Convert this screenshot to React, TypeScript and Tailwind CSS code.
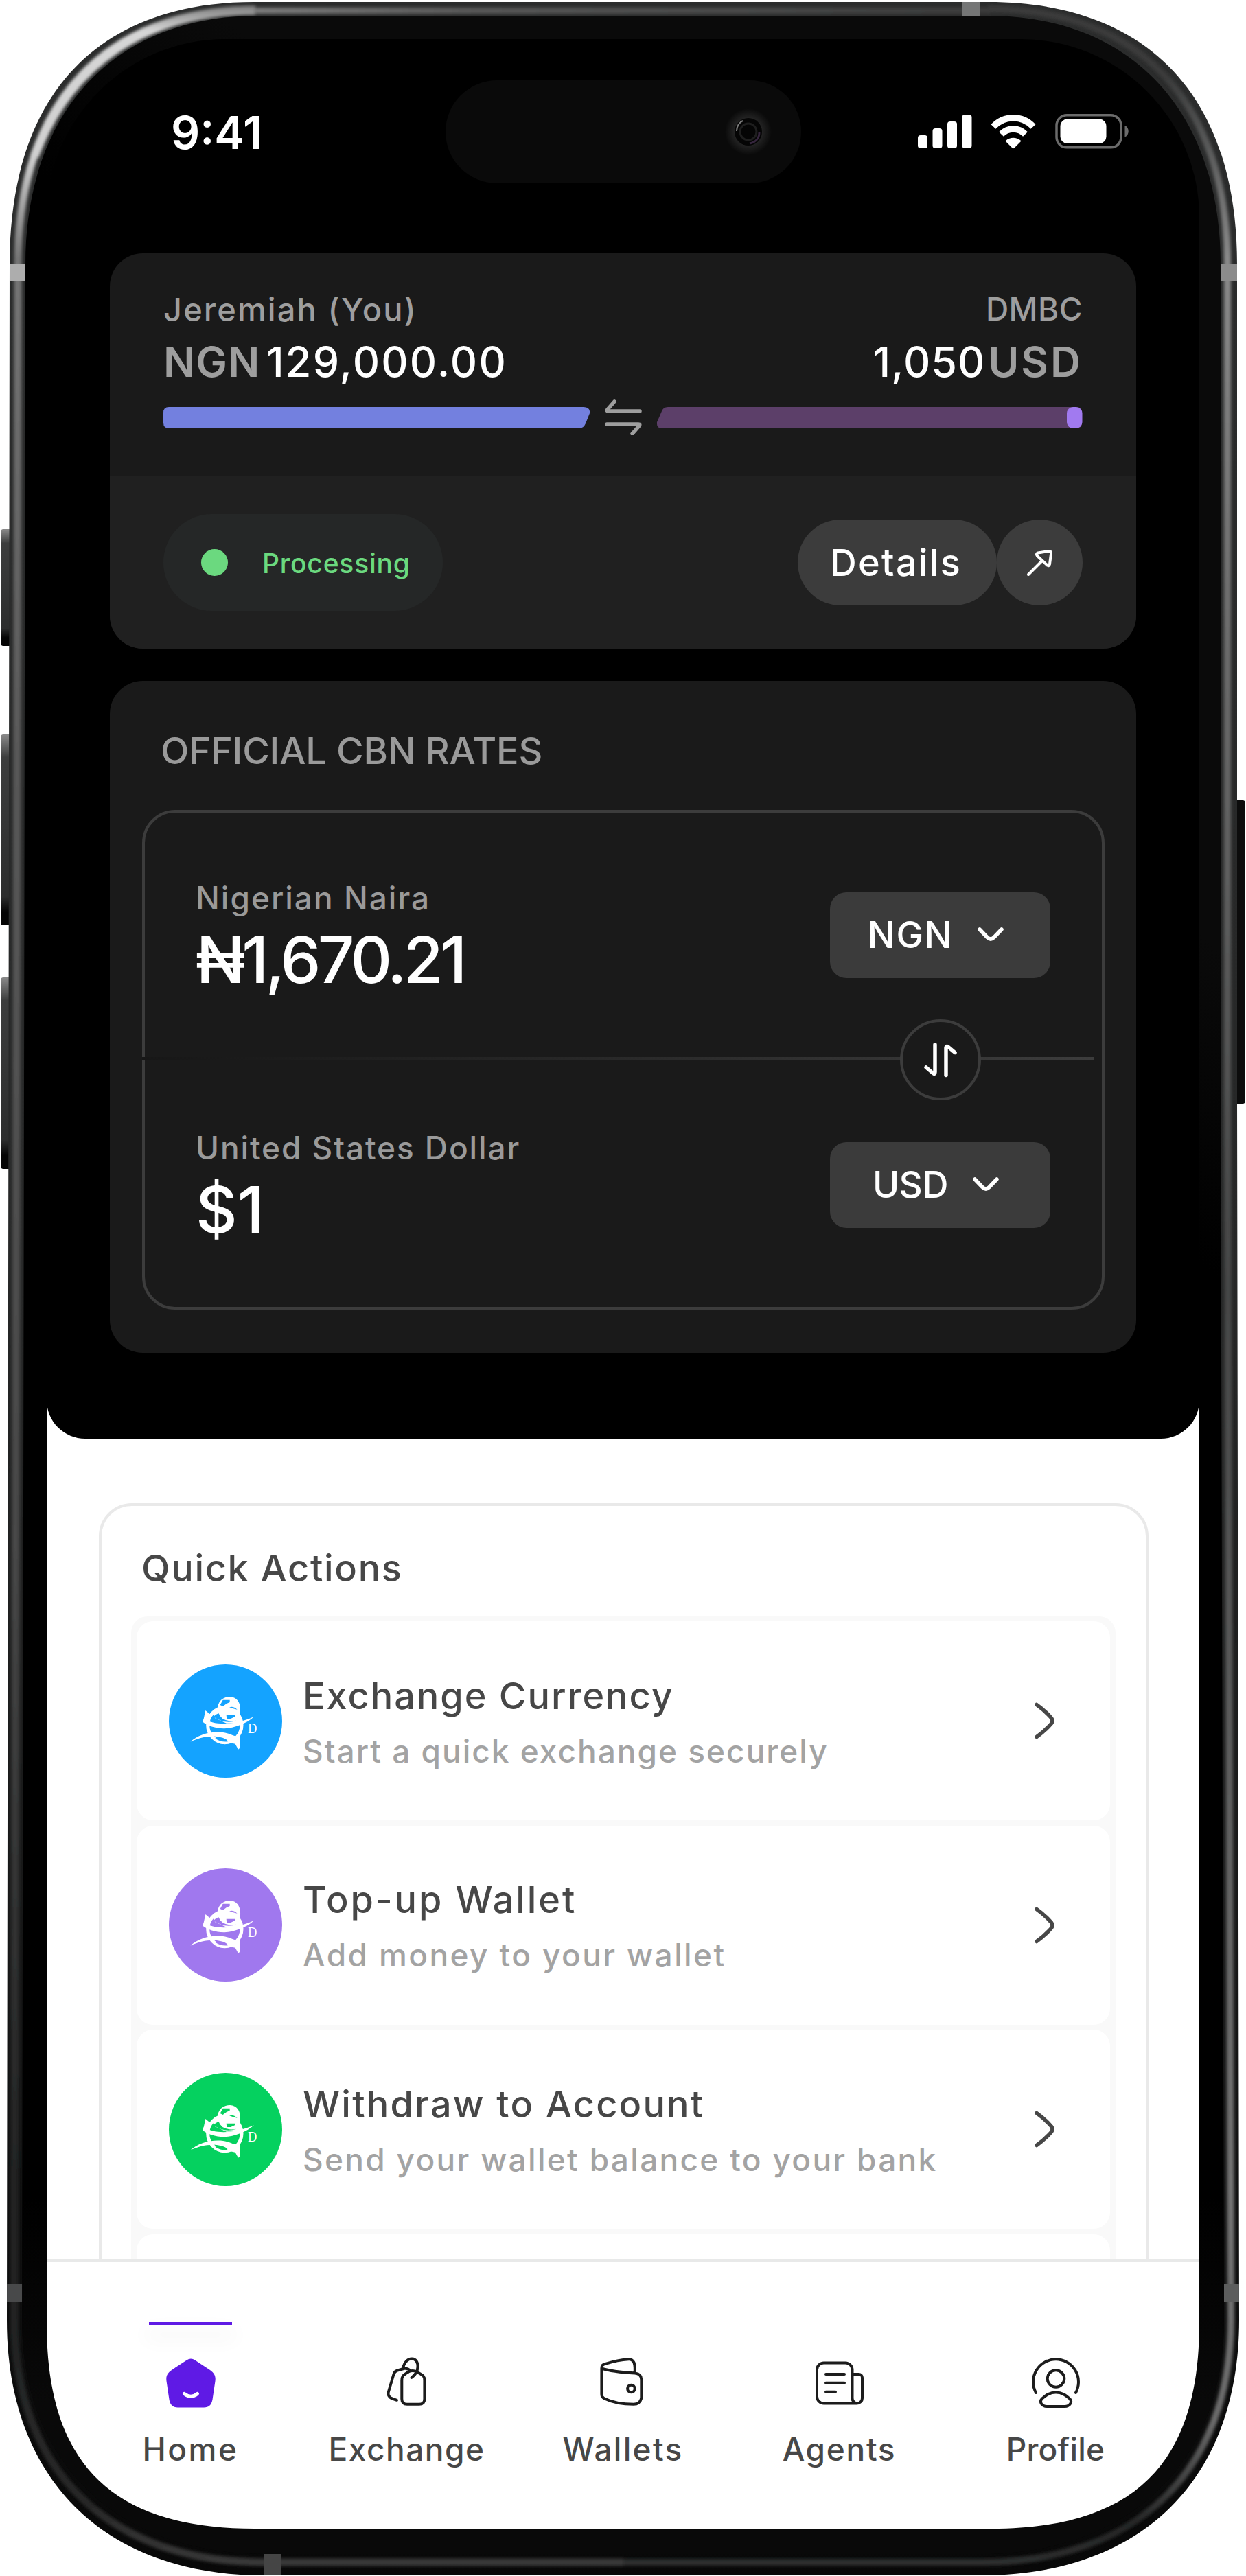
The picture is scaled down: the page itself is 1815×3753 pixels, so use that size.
import type { ReactNode } from 'react';

const BODY =
  'M370 3H1440C1672 3 1802 140 1802 385V1600L1805 3380C1805 3610 1665 3752 1430 3752H385C150 3752 10 3610 10 3380L14 385C14 140 140 3 370 3Z';
const BEZEL =
  'M375 23H1440C1650 23 1778 165 1778 385V1600L1783 3380C1783 3592 1640 3721 1430 3721H385C175 3721 32 3592 32 3380L37 385C37 165 165 23 375 23Z';
const SCREEN =
  'M371 57H1440C1635 57 1742 175 1742 385L1747 1800V3385C1747 3590 1652 3684 1444 3684H371C163 3684 68 3590 68 3385V385C68 175 175 57 371 57Z';

function DeviceFrame() {
  return (
    <svg className="absolute inset-0" width="1815" height="3753" viewBox="0 0 1815 3753" aria-hidden="true">
      <defs>
        <linearGradient id="edge" x1="0" y1="0" x2="0" y2="3753" gradientUnits="userSpaceOnUse">
          <stop offset="0" stopColor="#2b2c2c" />
          <stop offset="0.5" stopColor="#262727" />
          <stop offset="1" stopColor="#080808" />
        </linearGradient>
        <linearGradient id="leftShine" x1="0" y1="0" x2="0" y2="3753" gradientUnits="userSpaceOnUse">
          <stop offset="0" stopColor="#6a6a6a" />
          <stop offset="0.012" stopColor="#d6d6d6" />
          <stop offset="0.06" stopColor="#d0d0d0" />
          <stop offset="0.1" stopColor="#757575" />
          <stop offset="0.3" stopColor="#585858" />
          <stop offset="0.6" stopColor="#484848" />
          <stop offset="0.85" stopColor="#222323" />
          <stop offset="0.97" stopColor="#262626" />
          <stop offset="1" stopColor="#3c3c3c" />
        </linearGradient>
        <linearGradient id="rightShine" x1="0" y1="0" x2="0" y2="3753" gradientUnits="userSpaceOnUse">
          <stop offset="0" stopColor="#3a3b3b" />
          <stop offset="0.03" stopColor="#3a3b3b" />
          <stop offset="0.1" stopColor="#8a8a8a" />
          <stop offset="0.25" stopColor="#6c6c6c" />
          <stop offset="0.5" stopColor="#454646" />
          <stop offset="0.85" stopColor="#747474" />
          <stop offset="0.94" stopColor="#6a6a6a" />
          <stop offset="0.98" stopColor="#242525" />
          <stop offset="1" stopColor="#303131" />
        </linearGradient>
        <linearGradient id="topShine" x1="370" y1="0" x2="1440" y2="0" gradientUnits="userSpaceOnUse">
          <stop offset="0" stopColor="#7a7a7a" />
          <stop offset="0.3" stopColor="#575757" />
          <stop offset="1" stopColor="#3a3b3b" />
        </linearGradient>
        <linearGradient id="glass" x1="0" y1="2600" x2="1600" y2="900" gradientUnits="userSpaceOnUse">
          <stop offset="0" stopColor="#000" />
          <stop offset="0.75" stopColor="#000" />
          <stop offset="0.9" stopColor="#0a0a0a" />
        </linearGradient>
        <linearGradient id="glassLow" x1="0" y1="3200" x2="0" y2="3500" gradientUnits="userSpaceOnUse">
          <stop offset="0" stopColor="#090909" stopOpacity="0" />
          <stop offset="1" stopColor="#090909" />
        </linearGradient>
        <linearGradient id="button" x1="0" y1="0" x2="0" y2="1">
          <stop offset="0" stopColor="#8a8a8a" />
          <stop offset="0.12" stopColor="#3c3d3d" />
          <stop offset="0.85" stopColor="#2c2d2d" />
          <stop offset="0.93" stopColor="#050505" />
        </linearGradient>
        <filter id="soft" x="-5%" y="-5%" width="110%" height="110%">
          <feGaussianBlur stdDeviation="2" />
        </filter>
        <clipPath id="bodyClip">
          <path d={BODY} />
        </clipPath>
      </defs>

      {/* side buttons */}
      <rect x="1" y="771" width="16" height="170" rx="4" fill="url(#button)" />
      <rect x="1" y="1070" width="16" height="278" rx="4" fill="url(#button)" />
      <rect x="1" y="1424" width="16" height="279" rx="4" fill="url(#button)" />
      <rect x="1798" y="1166" width="16" height="442" rx="4" fill="#0c0c0c" />

      <path d={BODY} fill="url(#edge)" />
      <g clipPath="url(#bodyClip)" fill="none" filter="url(#soft)">
        <path d="M372 14C152 14 26 152 26 385L21 3380C21 3602 162 3733 385 3733H908" stroke="url(#leftShine)" strokeWidth="11" />
        <path d="M372 15C210 15 100 95 50 228" stroke="url(#leftShine)" strokeWidth="13" />
        <path d="M1440 13C1663 13 1788 152 1788 385V1600L1793 3380C1793 3602 1653 3733 1430 3733H908" stroke="url(#rightShine)" strokeWidth="10" />
        <rect x="370" y="11" width="1072" height="9" fill="url(#topShine)" />
      </g>
      {/* antenna bands */}
      <g clipPath="url(#bodyClip)">
        <rect x="1401" y="3" width="26" height="20" fill="#757676" />
        <rect x="14" y="384" width="24" height="26" fill="#adadad" />
        <rect x="1778" y="384" width="24" height="26" fill="#8b8b8b" />
        <rect x="9" y="3327" width="24" height="27" fill="#48494a" />
        <rect x="1783" y="3327" width="24" height="27" fill="#5c5d5d" />
        <rect x="384" y="3721" width="26" height="32" fill="#454545" />
      </g>
      <path d={BEZEL} fill="url(#glass)" />
      <path d={BEZEL} fill="url(#glassLow)" />
      <path d={SCREEN} fill="#fff" />
    </svg>
  );
}

function StatusIcons() {
  return (
    <svg width="310" height="52" viewBox="0 0 310 52" className="mt-[-1px]">
      <g fill="#fff">
        <rect x="0" y="31" width="14" height="19" rx="4" />
        <rect x="21.5" y="21" width="14" height="29" rx="4" />
        <rect x="43" y="11" width="14" height="39" rx="4" />
        <rect x="64.5" y="1" width="14" height="49" rx="4" />
      </g>
      <g transform="translate(106 0)">
        <g fill="none" stroke="#fff" strokeWidth="9.5">
          <path d="M4 18.500C20 1.500 46 1.500 62 18.500" />
          <path d="M15.500 29.500C25 19.500 41 19.500 50.500 29.500" />
        </g>
        <path d="M22.500 38.500C28.500 33.500 37.500 33.500 43.500 38.500Q44.500 39.500 43.500 40.500L34.500 49.500Q33 51 31.500 49.500L22.500 40.500Q21.500 39.500 22.500 38.500Z" fill="#fff" />
      </g>
      <rect x="202" y="1.800" width="94" height="47" rx="15" fill="none" stroke="#6b6b6b" strokeWidth="3.500" />
      <rect x="207.500" y="7.500" width="67" height="35.500" rx="10" fill="#fff" />
      <path d="M301.500 17C308.500 19.500 308.500 31 301.500 33.500Z" fill="#6b6b6b" />
    </svg>
  );
}

function StatusBar() {
  return (
    <div className="flex items-center h-[150px]">
      <div className="w-[581px] pl-[181px] mt-0.5 text-[66px] leading-none font-semibold text-white">9:41</div>
      <div className="w-[518px] h-[150px] rounded-full bg-[#0a0a0a] flex items-center justify-end pr-[43px]">
        <svg width="68" height="68" viewBox="0 0 68 68">
          <defs>
            <radialGradient id="lens">
              <stop offset="0.5" stopColor="#282828" />
              <stop offset="1" stopColor="#0a0a0a" />
            </radialGradient>
          </defs>
          <circle cx="34" cy="34" r="34" fill="url(#lens)" />
          <circle cx="34" cy="34" r="20" fill="#050505" />
          <circle cx="34" cy="34" r="12" fill="none" stroke="#1e1e1e" strokeWidth="3" />
          <path d="M17 33C17 26 21 20 26 18" fill="none" stroke="#7c7c7c" strokeWidth="2" />
          <path d="M36 51C45 49 50 43 50 35" fill="none" stroke="#35253d" strokeWidth="3" />
        </svg>
      </div>
      <div className="ml-[170px]">
        <StatusIcons />
      </div>
    </div>
  );
}

function TransferCard() {
  return (
    <div className="mt-[102px] mx-[92px] h-[576px] rounded-[48px] overflow-hidden bg-[#1a1a1a]">
      <div className="h-[325px] px-[78px] pt-[52px]">
        <div className="flex items-center justify-between h-[58px] text-[47px] leading-none font-medium text-[#9e9e9e]">
          <span className="tracking-[2.1px]">Jeremiah (You)</span>
          <span className="text-[46px] tracking-[0.5px]">DMBC</span>
        </div>
        <div className="flex items-center justify-between mt-[18px] h-[60px] text-[61px] leading-none font-medium text-white">
          <div className="flex gap-[9px]">
            <span className="font-semibold tracking-[1px] text-[#9e9e9e]">NGN</span>
            <span className="tracking-[2.2px]">129,000.00</span>
          </div>
          <div className="flex gap-[4px]">
            <span className="tracking-[1px]">1,050</span>
            <span className="font-semibold tracking-[3px] text-[#9e9e9e]">USD</span>
          </div>
        </div>
        <div className="flex items-center justify-between mt-[26px] h-[50px]">
          <svg width="621" height="31" viewBox="0 0 621 31">
            <path d="M8 0H612Q622 0 621 9L615 24Q612 31 606 31H8Q0 31 0 23V8Q0 0 8 0Z" fill="#7380df" />
          </svg>
          <svg width="54" height="52" viewBox="0 0 54 52" fill="none" stroke="#9e9e9e" strokeWidth="5.500" strokeLinecap="round" strokeLinejoin="round">
            <path d="M51 17H5Q2 17 4 14.500L14 3" />
            <path d="M3 36H49Q52 36 50 38.500L40 50" />
          </svg>
          <svg width="621" height="31" viewBox="0 0 621 31">
            <path d="M17 0H612Q620 0 620 8V23Q620 31 612 31H8Q0 31 1 22L8 6Q10 0 17 0Z" fill="#5c3f69" />
            <rect x="598" y="0" width="22.500" height="31" rx="9" fill="#a17af0" />
          </svg>
        </div>
      </div>
      <div className="flex items-center justify-between h-[251px] px-[78px] bg-[#202020]">
        <div className="flex items-center w-[407px] h-[141px] pl-[55px] gap-[50px] rounded-full bg-[#252727]">
          <span className="size-[39px] rounded-full bg-[#6bd97f]" />
          <span className="mt-0.5 text-[39px] leading-none font-medium tracking-[0.8px] text-[#6bd97f]">Processing</span>
        </div>
        <div className="flex">
          <div className="flex items-center justify-center w-[290px] h-[125px] pr-1 rounded-full bg-[#3c3c3c] text-[54px] leading-none font-medium tracking-[2.3px] text-white">
            Details
          </div>
          <div className="flex items-center justify-center size-[125px] rounded-full bg-[#3c3c3c]">
            <svg width="42" height="42" viewBox="0 0 42 42" fill="none" stroke="#fff" strokeWidth="4" strokeLinecap="round" strokeLinejoin="round">
              <path d="M4 38L24 18" />
              <path d="M18 6.500L33 4Q37.500 3.500 37 8L35 23Q34 27 31 24L17 11Q14.500 7.500 18 6.500Z" />
            </svg>
          </div>
        </div>
      </div>
    </div>
  );
}

interface RateRowProps {
  label: string;
  labelClass: string;
  amount: string;
  amountClass: string;
  code: string;
  codeClass: string;
}

function RateRow({ label, labelClass, amount, amountClass, code, codeClass }: RateRowProps) {
  return (
    <div className="flex items-center justify-between h-[356px] pl-[74px] pr-[75px]">
      <div className="mt-1.5">
        <div className={`text-[46px] leading-none font-medium text-[#9a9a9a] ${labelClass}`}>{label}</div>
        <div className={`mt-5 text-[94px] leading-none font-medium text-white ${amountClass}`}>{amount}</div>
      </div>
      <div className="flex items-center justify-center gap-[31px] w-[321px] h-[125px] pr-2 rounded-[24px] bg-[#3b3b3b] text-white">
        <span className={`text-[53px] leading-none font-medium ${codeClass}`}>{code}</span>
        <svg width="48" height="24" viewBox="0 0 48 24" fill="none" stroke="#fff" strokeWidth="5.500" strokeLinecap="round">
          <path d="M8 4L19 15.500Q24 20.500 29 15.500L40 4" />
        </svg>
      </div>
    </div>
  );
}

function RatesCard() {
  return (
    <div className="mt-[47px] mx-[92px] h-[979px] pt-[75px] rounded-[48px] bg-[#1a1a1a]">
      <h2 className="pl-[74px] text-[54px] leading-none font-medium tracking-[-0.15px] text-[#9a9a9a]">OFFICIAL CBN RATES</h2>
      <div className="mt-[59px] ml-[47px] w-[1402px] h-[728px] border-4 border-[#3c3c3c] rounded-[48px]">
        <RateRow
          label="Nigerian Naira"
          labelClass="tracking-[2px]"
          amount="₦1,670.21"
          amountClass="tracking-[-4.6px]"
          code="NGN"
          codeClass="tracking-[1.5px]"
        />
        <div className="relative -ml-1 w-[1386px] h-1 bg-linear-to-r from-[#171717] to-[#3c3c3c]">
          <div className="absolute left-[1104px] -top-[55px] flex items-center justify-center size-[118px] rounded-full border-4 border-[#3c3c3c] bg-[#1a1a1a]">
            <svg width="50" height="52" viewBox="0 0 50 52" fill="none" stroke="#fff" strokeWidth="5.500" strokeLinecap="round" strokeLinejoin="round">
              <path d="M17 4V44Q17 48 14 45.500L4 37" />
              <path d="M33 48.500V9Q33 5 36.500 7.500L46 15.500" />
            </svg>
          </div>
        </div>
        <div className="pt-1">
          <RateRow
            label="United States Dollar"
            labelClass="tracking-[1.9px]"
            amount="$1"
            amountClass="tracking-normal"
            code="USD"
            codeClass="tracking-[-0.5px]"
          />
        </div>
      </div>
    </div>
  );
}

function BrandMark({ color }: { color: string }) {
  return (
    <svg width="165" height="165" viewBox="48 75 495 495">
      <circle cx="295.500" cy="322.500" r="247.500" fill={color} />
      <g fill="#fff">
        <path d="M262 258C266 232 288 216 315 216C345 217 362 242 360 275V318L330 324L262 290Z" />
        <ellipse cx="292" cy="340" rx="74" ry="76" fill="none" stroke="#fff" strokeWidth="15" />
        <path d="M240 290C255 262 285 254 310 260C340 268 360 290 362 330L300 332L250 310Z" />
        <path d="M208 276L232 296L216 324L197 326Z" />
        <path d="M200 312C245 342 335 342 420 303C390 332 335 353 290 355C250 354 215 342 197 327Z" />
        <path d="M142 413C175 382 230 366 285 372C310 375 335 390 346 388L360 372L358 440L351 446L338 422L310 416C300 392 250 386 215 391C185 395 165 403 142 413Z" />
      </g>
      <g fill={color}>
        <path d="M272 252L284 230H314V240L300 246L284 258Z" />
        <path d="M312 262Q330 256 347 272Q330 270 312 262Z" />
        <path d="M243 304Q252 292 266 289Q274 316 312 322Q330 323 344 320Q292 338 243 304Z" />
        <path d="M299 296H336V304L318 312H301Z" />
        <path d="M250 398Q280 388 306 412Q278 416 250 398Z" />
      </g>
      <text x="393" y="376" fill="#fff" fontSize="64" fontFamily="Liberation Serif, serif" textLength="40" lengthAdjust="spacingAndGlyphs">
        D
      </text>
    </svg>
  );
}

const actions = [
  {
    title: 'Exchange Currency',
    titleClass: 'tracking-[2px]',
    text: 'Start a quick exchange securely',
    textClass: 'tracking-[2px]',
    color: '#14a3ff',
  },
  {
    title: 'Top-up Wallet',
    titleClass: 'tracking-[2.9px]',
    text: 'Add money to your wallet',
    textClass: 'tracking-[2.4px]',
    color: '#a078ee',
  },
  {
    title: 'Withdraw to Account',
    titleClass: 'tracking-[2.2px]',
    text: 'Send your wallet balance to your bank',
    textClass: 'tracking-[2.3px]',
    color: '#05d15f',
  },
];

function QuickActions() {
  return (
    <div className="h-[1195px] pt-[94px] pl-[76px] overflow-hidden">
      <div className="w-[1529px] h-[1300px] border-4 border-[#e9e9e9] rounded-[48px] pt-[64px]">
        <h2 className="pl-[58px] text-[54px] leading-none font-medium tracking-[1.7px] text-[#474747]">Quick Actions</h2>
        <div className="flex flex-col gap-[7.6px] mt-[43px] ml-[43px] w-[1434px] p-2 pt-[7px] rounded-[24px] bg-[#f9f9f9]">
          {actions.map((a) => (
            <div key={a.title} className="flex items-center h-[290px] pl-[47px] pr-[79px] rounded-[24px] bg-white">
              <BrandMark color={a.color} />
              <div className="ml-[30px] mt-[3px] flex-1">
                <div className={`text-[54px] leading-none font-medium text-[#474747] ${a.titleClass}`}>{a.title}</div>
                <div className={`mt-[30px] text-[46px] leading-none font-medium text-[#a3a3a3] ${a.textClass}`}>{a.text}</div>
              </div>
              <svg width="32" height="56" viewBox="0 0 32 56" fill="none" stroke="#474747" strokeWidth="5.500" strokeLinecap="round">
                <path d="M4 4.500C13 11 20 17.500 25.500 24Q28.500 28 25.500 32C20 38.500 13 45 4 51.500" />
              </svg>
            </div>
          ))}
          <div className="h-[290px] rounded-[24px] bg-white" />
        </div>
      </div>
    </div>
  );
}

function NavIcon({ children }: { children: ReactNode }) {
  return (
    <svg width="84" height="84" viewBox="0 0 84 84" fill="none" stroke="#1c1c1c" strokeWidth="4" strokeLinecap="round" strokeLinejoin="round">
      {children}
    </svg>
  );
}

const tabs = [
  {
    label: 'Home',
    labelClass: 'tracking-[2.5px]',
    icon: (
      <NavIcon>
        <path d="M36 8.500Q42 4.500 48 8.500L70 23C76 27.500 78.500 31 77.500 39L73.500 66C72 74 68 77.500 61 77.500H23C16 77.500 12 74 10.500 66L6.500 39C5.500 31 8 27.500 14 23Z" fill="#5f1ae5" stroke="none" />
        <path d="M32.500 57.500Q42 65 51.500 57.500" stroke="#fff" strokeWidth="5" />
      </NavIcon>
    ),
  },
  {
    label: 'Exchange',
    labelClass: 'tracking-[1.5px]',
    icon: (
      <NavIcon>
        <path d="M34.300 38C34.300 31 36.500 30.500 44 25.500Q50 22.500 56 25.500C65 30.500 67.400 31 67.400 38V65Q67.400 72.800 59.500 72.800H42Q34.300 72.800 34.300 65Z" />
        <path d="M27 66.800L19 64Q13.500 61 14.800 55L22.500 29Q24 24.500 28 23.500L38 20.800Q43 20 47 24" />
        <path d="M35.500 21C38 12 43 6.500 49 6.500C55 6.500 58 12 57.500 19C57 26 54 30 48.500 34" />
      </NavIcon>
    ),
  },
  {
    label: 'Wallets',
    labelClass: 'tracking-[2.3px]',
    icon: (
      <NavIcon>
        <path d="M10.400 20V58Q10.400 62.500 14.500 64.500C26 70 42 72.800 57 72.800Q66 72.800 68.300 64V37Q68.300 28.500 59 27.500C42 26.500 24 25 10.400 20.500C10.400 16 12 14.800 16 13.800C28 10 40 7.800 50 7.200Q55 7 57.500 12Q59.500 18 58.500 27" />
        <circle cx="53.400" cy="50" r="5.300" />
      </NavIcon>
    ),
  },
  {
    label: 'Agents',
    labelClass: 'tracking-[1.7px]',
    icon: (
      <NavIcon>
        <path d="M68 71.500H19a10 10 0 0 1-10-10V22.500a10 10 0 0 1 10-10h31.500a10 10 0 0 1 10 10V64a7.200 7.200 0 0 0 14.500 0V34a5 5 0 0 0-5-5H60.500" />
        <path d="M22 29H49M22 41.700H49M22 54.700H36" />
      </NavIcon>
    ),
  },
  {
    label: 'Profile',
    labelClass: 'tracking-[0.2px]',
    icon: (
      <NavIcon>
        <circle cx="42" cy="35.500" r="12.300" />
        <path d="M13 56A33 33 0 1 1 71 56" />
        <path d="M42 55.500C33 55.500 28 59.500 22 64.500C17 69.500 22 76 29 76H55C62 76 67 69.500 62 64.500C56 59.500 51 55.500 42 55.500Z" />
      </NavIcon>
    ),
  },
];

function BottomNav() {
  return (
    <nav className="grid grid-cols-5 px-[52px] pt-[88px] border-t-4 border-[#e8e9e9]">
      {tabs.map((tab, i) => (
        <div key={tab.label} className="flex flex-col items-center">
          <div
            className={
              i === 0
                ? 'w-[121px] h-[5px] bg-[#5f1ae5] shadow-[0_16px_28px_6px_rgba(0,0,0,0.035)]'
                : 'w-[121px] h-[5px]'
            }
          />
          <div className="mt-[42px]">{tab.icon}</div>
          <div className={`mt-[31px] text-[46px] leading-none font-[450] text-[#474747] ${tab.labelClass}`}>{tab.label}</div>
        </div>
      ))}
    </nav>
  );
}

export default function App() {
  return (
    <div className="relative w-[1815px] h-[3753px] overflow-hidden bg-white font-['Inter',sans-serif] whitespace-nowrap">
      <DeviceFrame />
      <main className="relative ml-[68px] pt-[57px] w-[1679px]">
        <header className="h-[2039px] pt-[60px] bg-black rounded-t-[260px] rounded-b-[56px]">
          <StatusBar />
          <TransferCard />
          <RatesCard />
        </header>
        <QuickActions />
        <BottomNav />
      </main>
    </div>
  );
}
